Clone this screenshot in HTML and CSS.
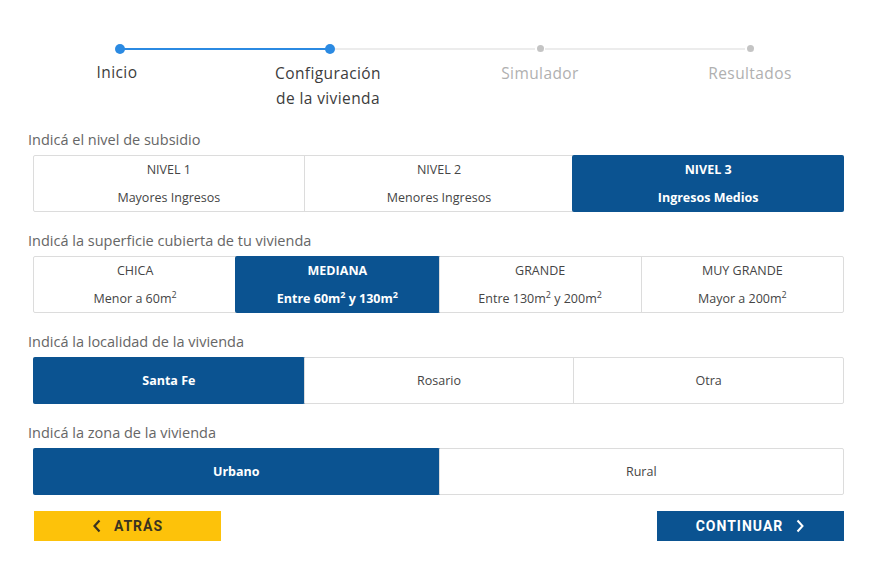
FILE: index.html
```html
<!DOCTYPE html>
<html lang="es">
<head>
    <meta charset="UTF-8">
    <meta name="viewport" content="width=device-width, initial-scale=1.0">
    <title>Simulador de vivienda</title>
    <link rel="stylesheet" href="styles.css">
</head>
<body>
    <div class="stepper">
        <div class="step done">
            <span class="dot"></span>
            <span class="step-label">Inicio</span>
        </div>
        <div class="step current">
            <span class="dot"></span>
            <span class="step-label">Configuración<br>de la vivienda</span>
        </div>
        <div class="step">
            <span class="dot"></span>
            <span class="step-label">Simulador</span>
        </div>
        <div class="step last">
            <span class="dot"></span>
            <span class="step-label">Resultados</span>
        </div>
    </div>

    <div class="form">
        <div class="question">
            <p class="question-title">Indicá el nivel de subsidio</p>
            <div class="options cols-3 tall">
                <div class="option">
                    <span>NIVEL 1</span>
                    <span>Mayores Ingresos</span>
                </div>
                <div class="option">
                    <span>NIVEL 2</span>
                    <span>Menores Ingresos</span>
                </div>
                <div class="option selected">
                    <span>NIVEL 3</span>
                    <span>Ingresos Medios</span>
                </div>
            </div>
        </div>

        <div class="question">
            <p class="question-title">Indicá la superficie cubierta de tu vivienda</p>
            <div class="options cols-4 tall">
                <div class="option">
                    <span>CHICA</span>
                    <span>Menor a 60m<sup>2</sup></span>
                </div>
                <div class="option selected">
                    <span>MEDIANA</span>
                    <span>Entre 60m<sup>2</sup> y 130m<sup>2</sup></span>
                </div>
                <div class="option">
                    <span>GRANDE</span>
                    <span>Entre 130m<sup>2</sup> y 200m<sup>2</sup></span>
                </div>
                <div class="option">
                    <span>MUY GRANDE</span>
                    <span>Mayor a 200m<sup>2</sup></span>
                </div>
            </div>
        </div>

        <div class="question">
            <p class="question-title">Indicá la localidad de la vivienda</p>
            <div class="options cols-3">
                <div class="option selected"><span>Santa Fe</span></div>
                <div class="option"><span>Rosario</span></div>
                <div class="option"><span>Otra</span></div>
            </div>
        </div>

        <div class="question">
            <p class="question-title">Indicá la zona de la vivienda</p>
            <div class="options cols-2">
                <div class="option selected"><span>Urbano</span></div>
                <div class="option"><span>Rural</span></div>
            </div>
        </div>

        <div class="actions">
            <button class="btn btn-back">
                <svg width="10" height="14" viewBox="0 0 10 14"><path d="M7.5 1.5 L2.5 7 L7.5 12.5" fill="none" stroke="currentColor" stroke-width="2.2"/></svg>
                ATRÁS
            </button>
            <button class="btn btn-next">
                CONTINUAR
                <svg width="10" height="14" viewBox="0 0 10 14"><path d="M2.5 1.5 L7.5 7 L2.5 12.5" fill="none" stroke="currentColor" stroke-width="2"/></svg>
            </button>
        </div>
    </div>
</body>
</html>
```

FILE: styles.css
```css
:root {
    --blue: #0b5391;
    --step-blue: #2b8ae2;
    --yellow: #fdc20a;
    --border: #dcdcdc;
    --text: #454545;
}

body {
    margin: 0;
    font-family: 'Open Sans', 'Liberation Sans', sans-serif;
    color: var(--text);
    background: #fff;
}

/* stepper */
.stepper {
    display: grid;
    grid-template-columns: repeat(4, 210px);
    margin: 44px 0 0 15px;
    height: 86px;
}

.step {
    position: relative;
    display: flex;
    flex-direction: column;
    align-items: center;
}

.step::after {
    content: "";
    position: absolute;
    top: 4px;
    left: 110px;
    width: 200px;
    height: 2px;
    background: #ececec;
}

.step.done::after {
    left: 105px;
    width: 210px;
    background: var(--step-blue);
}

.step.last::after {
    display: none;
}

.dot {
    width: 7px;
    height: 7px;
    margin: 1px 0 2px;
    border-radius: 50%;
    background: #c4c4c4;
}

.step.done .dot,
.step.current .dot {
    width: 10px;
    height: 10px;
    margin: 0;
    background: var(--step-blue);
}

.step-label {
    margin-top: 7px;
    font-size: 15.5px;
    letter-spacing: 0.4px;
    line-height: 25px;
    text-align: center;
    color: #b0b0b0;
}

.step.done .step-label,
.step.current .step-label {
    color: #3c3c3c;
}

.step.done .step-label {
    margin-left: -6px;
    margin-top: 6px;
}

.step.current .step-label {
    margin-left: -4px;
}

/* form */
.form {
    width: 816px;
    margin-left: 28px;
}

.question-title {
    margin: 0 0 5px;
    font-size: 14.5px;
    line-height: 20px;
    color: #666;
}

.question {
    margin-bottom: 19px;
}

.options {
    display: grid;
    margin-left: 5px;
    border: 1px solid var(--border);
    border-radius: 2px;
    height: 45px;
}

.options.tall {
    height: 55px;
}

.cols-2 { grid-template-columns: repeat(2, 1fr); }
.cols-3 { grid-template-columns: repeat(3, 1fr); }
.cols-4 { grid-template-columns: repeat(4, 1fr); }

.option {
    display: flex;
    flex-direction: column;
    align-items: center;
    justify-content: center;
    gap: 8px;
    font-size: 12.5px;
    line-height: 20px;
    color: var(--text);
    border-left: 1px solid var(--border);
}

.option:first-child {
    border-left: none;
}

.option.selected {
    margin: -1px;
    background: var(--blue);
    color: #fff;
    font-weight: 700;
    border-left: none;
    border-radius: 2px;
}

.option sup {
    font-size: 9px;
    line-height: 0;
}

/* buttons */
.actions {
    display: flex;
    justify-content: space-between;
    margin: -3px 0 0 6px;
}

.btn {
    display: flex;
    align-items: center;
    justify-content: center;
    gap: 12px;
    width: 187px;
    height: 30px;
    border: none;
    font-family: Roboto, 'Liberation Sans', sans-serif;
    font-size: 14px;
    font-weight: 700;
    letter-spacing: 1px;
    cursor: pointer;
}

.btn-back {
    background: var(--yellow);
    color: #3a3320;
}

.btn-next {
    background: var(--blue);
    color: #fff;
}
```
